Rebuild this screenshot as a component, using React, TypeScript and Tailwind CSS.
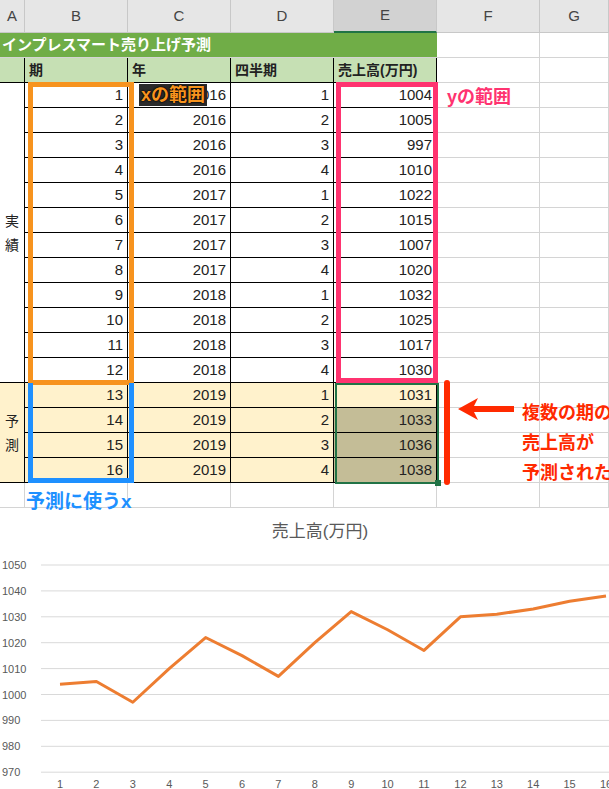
import React from "react";

const actual = [
  [1, 2016, 1, 1004], [2, 2016, 2, 1005], [3, 2016, 3, 997], [4, 2016, 4, 1010],
  [5, 2017, 1, 1022], [6, 2017, 2, 1015], [7, 2017, 3, 1007], [8, 2017, 4, 1020],
  [9, 2018, 1, 1032], [10, 2018, 2, 1025], [11, 2018, 3, 1017], [12, 2018, 4, 1030],
];
const forecast = [
  [13, 2019, 1, 1031], [14, 2019, 2, 1033], [15, 2019, 3, 1036], [16, 2019, 4, 1038],
];
const values = [...actual, ...forecast].map((r) => r[3]);

const font = { fontFamily: '"Liberation Sans", "Noto Sans CJK JP", sans-serif' };

function Chart() {
  const x = (i: number) => 60 + i * 36.4;
  const y = (v: number) => 57 + ((1050 - v) / 10) * 25.9;
  const pts = values.map((v, i) => `${x(i)},${y(v)}`).join(" ");
  return (
    <svg width="609" height="281" className="block">
      <text x="320" y="29" textAnchor="middle" fontSize="17" fill="#595959" style={font}>
        売上高(万円)
      </text>
      {[1050, 1040, 1030, 1020, 1010, 1000, 990, 980, 970].map((v) => (
        <g key={v}>
          <line x1="41" x2="609" y1={y(v)} y2={y(v)} stroke="#d9d9d9" strokeWidth="1" />
          <text x="2" y={y(v) + 4} fontSize="11" fill="#595959" style={font}>
            {v}
          </text>
        </g>
      ))}
      {values.map((_, i) => (
        <text key={i} x={x(i)} y="280" textAnchor="middle" fontSize="11" fill="#595959" style={font}>
          {i + 1}
        </text>
      ))}
      <polyline points={pts} fill="none" stroke="#ed7d31" strokeWidth="3" strokeLinejoin="round" />
    </svg>
  );
}

export default function App() {
  const cols = ["A", "B", "C", "D", "E", "F", "G"];
  const grid = "grid grid-cols-[25px_103px_103px_103px_103px_103px_1fr]";
  const light = "border-r border-b border-[#d4d4d4]";
  const num = "flex items-center justify-end pr-1 border-r border-b border-black text-[15px]";
  return (
    <div className="relative w-[609px] h-[789px] overflow-hidden bg-white text-[#222]" style={font}>
      <div className={`${grid} h-[33px] bg-[#e6e6e6] text-[15px] text-[#444]`}>
        {cols.map((c) => (
          <div
            key={c}
            className={`flex items-center justify-center border-r border-[#c8c8c8] ${
              c === "E" ? "bg-[#d2d2d2] border-b-2 border-b-[#217346]" : "border-b border-b-[#c8c8c8]"
            }`}
          >
            {c}
          </div>
        ))}
      </div>
      <div className={`${grid} auto-rows-[25px]`}>
        <div className="col-span-5 bg-[#70ad47] text-white font-bold text-[15px] flex items-center pl-0.5 border-b border-[#d4d4d4]">
          インプレスマート売り上げ予測
        </div>
        <div className={light} />
        <div className={light} />
        {["", "期", "年", "四半期", "売上高(万円)"].map((h, i) => (
          <div key={i} className="bg-[#c6e0b4] border-r border-b border-black font-bold text-[14px] flex items-center pl-1">
            {h}
          </div>
        ))}
        <div className={light} />
        <div className={light} />
        <div className="row-span-12 border-r border-b border-black flex items-center justify-center text-[14px] leading-[24px] text-center">
          実<br />績
        </div>
        {actual.map((r) => (
          <React.Fragment key={r[0]}>
            {r.map((v, j) => (
              <div key={j} className={num}>{v}</div>
            ))}
            <div className={light} />
            <div className={light} />
          </React.Fragment>
        ))}
        <div className="row-span-4 bg-[#fff2cc] border-r border-b border-black flex items-center justify-center text-[14px] leading-[24px] text-center">
          予<br />測
        </div>
        {forecast.map((r, i) => (
          <React.Fragment key={r[0]}>
            {r.map((v, j) => (
              <div key={j} className={`${num} ${j === 3 && i > 0 ? "bg-[#c4bd97]" : "bg-[#fff2cc]"}`}>{v}</div>
            ))}
            <div className={light} />
            <div className={light} />
          </React.Fragment>
        ))}
        {cols.map((c) => (
          <div key={c} className={light} />
        ))}
      </div>
      <Chart />

      {/* overlays */}
      <div className="absolute left-[28px] top-[82px] w-[106px] h-[303px] border-[5px] border-[#f7931e]" />
      <div className="absolute left-[336px] top-[82px] w-[102px] h-[301px] border-[5px] border-[#ff3370]" />
      <div className="absolute left-[28px] top-[383px] w-[106px] h-[100px] border-[5px] border-t-0 border-[#1e90ff]" />
      <div className="absolute left-[335px] top-[383px] w-[104px] h-[101px] border-2 border-[#217346]" />
      <div className="absolute left-[435px] top-[480px] w-[6px] h-[6px] bg-[#217346]" />
      <div className="absolute left-[444px] top-[380px] w-[6px] h-[105px] rounded-full bg-[#ff2a00]" />
      <div
        className="absolute left-[139px] top-[84px] text-[18px] font-bold text-[#f7931e] bg-[#2b2b2b] px-[2px] leading-[22px]"
        style={{ textShadow: "0 0 2px #000, 0 0 2px #000" }}
      >
        xの範囲
      </div>
      <div className="absolute left-[447px] top-[84px] text-[18px] font-bold text-[#ff3370]">yの範囲</div>
      <div className="absolute left-[26px] top-[488px] text-[19px] font-bold text-[#1e90ff]">予測に使うx</div>
      <svg className="absolute left-[458px] top-[398px]" width="56" height="22">
        <polygon points="0,11 20,0 16,8 56,8 56,14 16,14 20,22" fill="#ff2a00" />
      </svg>
      <div className="absolute left-[522px] top-[398px] text-[18px] font-bold text-[#ff2a00] leading-[30px] whitespace-nowrap">
        複数の期の<br />売上高が<br />予測された
      </div>
    </div>
  );
}
